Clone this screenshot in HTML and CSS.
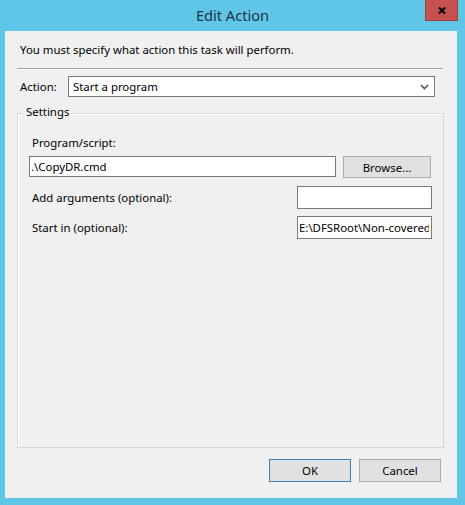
FILE: index.html
```html
<!DOCTYPE html>
<html lang="en">
<head>
<meta charset="utf-8">
<title>Edit Action</title>
<link rel="stylesheet" href="styles.css">
</head>
<body>
<div class="window">
  <div class="titlebar">
    <div class="title">Edit Action</div>
    <div class="close" aria-label="Close">
      <svg width="8" height="7" viewBox="0 0 8 7"><path d="M1 0.5 L7 6.5 M7 0.5 L1 6.5" stroke="#000" stroke-width="2" fill="none"/></svg>
    </div>
  </div>
  <div class="client">
    <p class="intro">You must specify what action this task will perform.</p>
    <div class="sep"></div>
    <div class="action-row">
      <span class="action-label">Action:</span>
      <div class="combo">
        <span class="combo-text">Start a program</span>
        <svg class="chev" width="9" height="6" viewBox="0 0 9 6"><path d="M1 1 L4.5 4.5 L8 1" stroke="#555" stroke-width="1.6" fill="none"/></svg>
      </div>
    </div>
    <div class="group">
      <div class="group-title">Settings</div>
      <div class="prog-label">Program/script:</div>
      <div class="prog-row">
        <input class="field field-prog" type="text" value=".\CopyDR.cmd" readonly>
        <div class="btn btn-browse">Browse...</div>
      </div>
      <div class="opt-row opt-args">
        <span class="opt-label">Add arguments (optional):</span>
        <input class="field field-opt" type="text" value="" readonly>
      </div>
      <div class="opt-row opt-start">
        <span class="opt-label">Start in (optional):</span>
        <input class="field field-opt" type="text" value="E:\DFSRoot\Non-covered" readonly>
      </div>
    </div>
    <div class="buttons">
      <div class="btn btn-ok">OK</div>
      <div class="btn btn-cancel">Cancel</div>
    </div>
  </div>
</div>
</body>
</html>
```
FILE: styles.css
```css
* { box-sizing: border-box; }
html, body { margin: 0; padding: 0; }
body {
  width: 465px;
  height: 505px;
  overflow: hidden;
  background: #60c6e8;
  font-family: "Noto Sans", "Open Sans", sans-serif;
  font-size: 11.4px;
  color: #000;
}
.window { display: flex; flex-direction: column; }
.titlebar {
  height: 31px;
  display: grid;
  grid-template-columns: 1fr auto 1fr;
}
.title {
  grid-column: 2;
  font-size: 14.6px;
  line-height: 18px;
  padding-top: 6px;
  color: #1c3446;
}
.close {
  grid-column: 3;
  justify-self: end;
  width: 33px;
  height: 21px;
  margin-right: 7px;
  background: #c75050;
  border: 1px solid #9a4040;
  border-top: none;
  display: flex;
  align-items: center;
  justify-content: center;
  padding-top: 1px;
}
.client {
  margin-left: 5px;
  width: 452px;
  height: 467px;
  background: #f0f0f0;
  display: flex;
  flex-direction: column;
}
.intro {
  margin: 0;
  padding: 11px 0 0 15px;
  line-height: 16px;
}
.sep {
  margin: 10px 0 0 12px;
  width: 426px;
  height: 2px;
  border-top: 1px solid #a0a0a0;
  border-bottom: 1px solid #ffffff;
}
.action-row {
  margin-top: 6px;
  padding-left: 15px;
  height: 21px;
  display: flex;
  align-items: center;
}
.action-label { width: 48px; }
.combo {
  width: 367px;
  height: 21px;
  background: #fff;
  border: 1px solid #7a7a7a;
  display: flex;
  align-items: center;
  padding: 0 5px 0 4px;
}
.combo-text { flex: 1; }
.chev { margin-top: 1px; }
.group {
  margin: 16px 0 0 12px;
  width: 427px;
  height: 335px;
  border: 1px solid #d5d5d5;
  box-shadow: inset 1px 1px 0 #ffffff;
}
.group-title {
  margin: -9px 0 0 5px;
  width: fit-content;
  padding: 0 3px;
  line-height: 14px;
  background: #f0f0f0;
}
.prog-label {
  margin-top: 16px;
  padding-left: 14px;
  line-height: 16px;
}
.prog-row {
  margin-top: 5px;
  padding-left: 11px;
  display: flex;
  align-items: flex-start;
}
.field {
  font: inherit;
  color: #000;
  background: #fff;
  border: 1px solid #7a7a7a;
  border-radius: 0;
  padding: 0 2px 0 1px;
  margin: 0;
  outline: none;
}
.field-prog { width: 307px; height: 21px; }
.btn {
  height: 23px;
  background: #e1e1e1;
  border: 1px solid #adadad;
  display: flex;
  align-items: center;
  justify-content: center;
}
.btn-browse { width: 88px; height: 22px; margin-left: 7px; }
.opt-row {
  display: flex;
  align-items: center;
  padding: 0 11px 0 14px;
}
.opt-args { margin-top: 8px; }
.opt-start { margin-top: 7px; }
.opt-label { flex: 1; }
.field-opt { width: 135px; height: 23px; }
.buttons {
  margin-top: 11px;
  padding-right: 16px;
  display: flex;
  justify-content: flex-end;
  gap: 8px;
}
.btn-ok, .btn-cancel { width: 82px; }
.btn-ok { border-color: #3c7fb1; }
```
